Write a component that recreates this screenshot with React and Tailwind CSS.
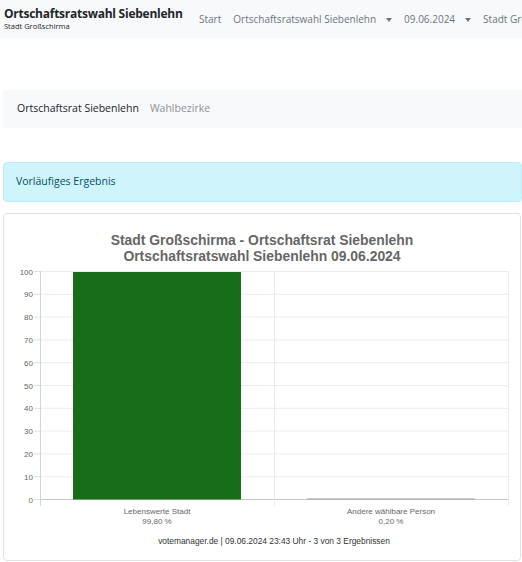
import React from 'react'

const yTicks = [100, 90, 80, 70, 60, 50, 40, 30, 20, 10, 0]

function Caret() {
  return <span className="ml-[10px] inline-block border-x-[3.5px] border-t-[4px] border-x-transparent border-t-[#6c757d] align-middle" />
}

function ResultChart() {
  // plot area in svg coords
  const left = 36
  const right = 504
  const top = 57
  const bottom = 285
  const step = (bottom - top) / 10
  return (
    <svg width="517" height="346" className="block" style={{ fontFamily: '"Liberation Sans", Arial, sans-serif' }}>
      <text x="258" y="31" textAnchor="middle" fontSize="13.9" fontWeight="bold" fill="#666">
        Stadt Großschirma - Ortschaftsrat Siebenlehn
      </text>
      <text x="258" y="47" textAnchor="middle" fontSize="13.9" fontWeight="bold" fill="#666">
        Ortschaftsratswahl Siebenlehn 09.06.2024
      </text>
      {yTicks.map((v, i) => {
        const y = top + i * step + 0.5
        return (
          <g key={v}>
            <line x1={left} x2={right} y1={y} y2={y} stroke={v === 0 ? '#c8c8c8' : '#ececec'} strokeWidth="1" />
            <line x1={left - 6} x2={left} y1={y} y2={y} stroke="#e0e0e0" strokeWidth="1" />
            <text x={left - 7} y={y + 3} textAnchor="end" fontSize="8" fill="#666">
              {v}
            </text>
          </g>
        )
      })}
      <line x1={left + 0.5} x2={left + 0.5} y1={top} y2={bottom + 7} stroke="#d4d4d4" strokeWidth="1" />
      <line x1="270.5" x2="270.5" y1={top} y2={bottom + 7} stroke="#ececec" strokeWidth="1" />
      <line x1={right + 0.5} x2={right + 0.5} y1={top} y2={bottom + 7} stroke="#ececec" strokeWidth="1" />
      <rect x="69" y={top + 1} width="168" height={bottom - top - 0.5} fill="#186e18" />
      <line x1="303" x2="471" y1={bottom} y2={bottom} stroke="#a0a0a0" strokeWidth="1.2" />
      <text x="153" y="300" textAnchor="middle" fontSize="8" fill="#666">Lebenswerte Stadt</text>
      <text x="153" y="310" textAnchor="middle" fontSize="8" fill="#666">99,80 %</text>
      <text x="387" y="300" textAnchor="middle" fontSize="8" fill="#666">Andere wählbare Person</text>
      <text x="387" y="310" textAnchor="middle" fontSize="8" fill="#666">0,20 %</text>
      <text x="270" y="330" textAnchor="middle" fontSize="8.4" fill="#333">
        votemanager.de | 09.06.2024 23:43 Uhr - 3 von 3 Ergebnissen
      </text>
    </svg>
  )
}

export default function App() {
  return (
    <div className="w-[522px] h-[562px] overflow-hidden bg-white" style={{ fontFamily: '"Open Sans", "Noto Sans", sans-serif' }}>
      <nav className="flex h-[38px] items-center bg-[#f8f9fa] whitespace-nowrap overflow-hidden">
        <div className="pl-[4px] w-[199px] shrink-0 pb-[2px]">
          <div className="text-[12px] font-bold leading-[15px] text-[#212529] tracking-[-0.25px]">Ortschaftsratswahl Siebenlehn</div>
          <div className="text-[7.5px] leading-[10px] text-[#212529]">Stadt Großschirma</div>
        </div>
        <div className="flex items-center gap-[12px] text-[10px] text-[#6c757d] pt-[1px]">
          <span>Start</span>
          <span>Ortschaftsratswahl Siebenlehn<Caret /></span>
          <span>09.06.2024<Caret /></span>
          <span>Stadt Großschirma</span>
        </div>
      </nav>

      <div className="ml-[3px] mt-[52px] flex h-[38px] items-center gap-[11px] rounded-l-[3px] bg-[#f8f9fa] pl-[14px] text-[10.5px] whitespace-nowrap">
        <span className="text-[#212529]">Ortschaftsrat Siebenlehn</span>
        <span className="text-[#8c9196]">Wahlbezirke</span>
      </div>

      <div className="ml-[3px] mt-[34px] flex h-[40px] items-center rounded-[4px] border border-[#b6effb] bg-[#cff4fc] pl-[12px] text-[10.5px] text-[#055160]">
        Vorläufiges Ergebnis
      </div>

      <div className="ml-[3px] mt-[11px] w-[518px] h-[348px] rounded-[4px] border border-[#dee2e6]">
        <ResultChart />
      </div>
    </div>
  )
}
